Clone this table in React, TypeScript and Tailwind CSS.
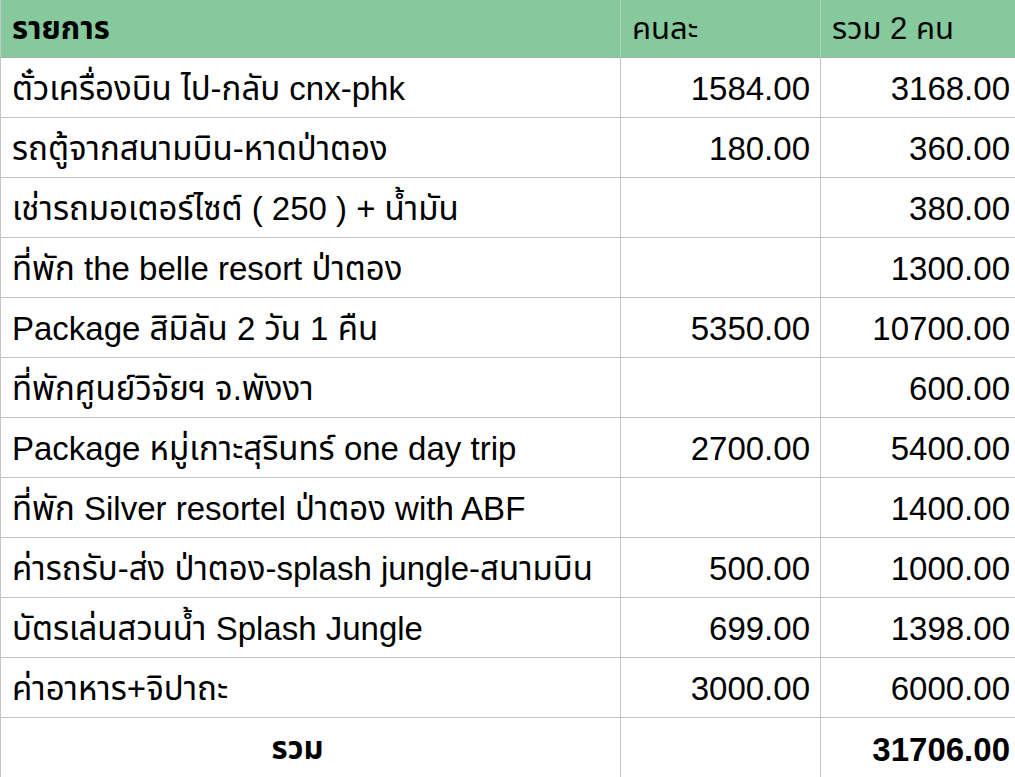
import React from "react";

const rows: [string, string, string][] = [
  ["ตั๋วเครื่องบิน ไป-กลับ cnx-phk", "1584.00", "3168.00"],
  ["รถตู้จากสนามบิน-หาดป่าตอง", "180.00", "360.00"],
  ["เช่ารถมอเตอร์ไซต์ ( 250 ) + น้ำมัน", "", "380.00"],
  ["ที่พัก the belle resort ป่าตอง", "", "1300.00"],
  ["Package สิมิลัน 2 วัน 1 คืน", "5350.00", "10700.00"],
  ["ที่พักศูนย์วิจัยฯ จ.พังงา", "", "600.00"],
  ["Package หมู่เกาะสุรินทร์ one day trip", "2700.00", "5400.00"],
  ["ที่พัก Silver resortel ป่าตอง with ABF", "", "1400.00"],
  ["ค่ารถรับ-ส่ง ป่าตอง-splash jungle-สนามบิน", "500.00", "1000.00"],
  ["บัตรเล่นสวนน้ำ Splash Jungle", "699.00", "1398.00"],
  ["ค่าอาหาร+จิปาถะ", "3000.00", "6000.00"],
];

export default function App() {
  return (
    <div
      className="w-[1015px] h-[777px] overflow-hidden bg-white text-black text-[33px] leading-none"
      style={{ fontFamily: '"Liberation Sans", "Noto Sans Thai", "Noto Sans", sans-serif' }}
    >
      <div className="grid grid-cols-[620px_200px_200px] w-[1020px]">
        <div className="h-[58px] bg-[#85c99d] border-b border-[#9fb8a6] flex items-center pl-[11px] font-bold text-[31px] border-l border-l-[#c8c8c8]">รายการ</div>
        <div className="h-[58px] bg-[#85c99d] border-b border-[#9fb8a6] border-l border-l-[#b4c9b9] flex items-center pl-[11px] text-[31px]">คนละ</div>
        <div className="h-[58px] bg-[#85c99d] border-b border-[#9fb8a6] border-l border-l-[#b4c9b9] flex items-center pl-[11px] text-[31px]">รวม 2 คน</div>
        {rows.map((r, i) => (
          <React.Fragment key={i}>
            <div className="h-[60px] border-b border-l border-[#c4c4c4] flex items-center pl-[11px] pt-[2px] whitespace-nowrap">{r[0]}</div>
            <div className="h-[60px] border-b border-l border-[#c4c4c4] flex items-center justify-end pr-[10px] pt-[2px]">{r[1]}</div>
            <div className="h-[60px] border-b border-l border-[#c4c4c4] flex items-center justify-end pr-[10px] pt-[2px]">{r[2]}</div>
          </React.Fragment>
        ))}
        <div className="h-[60px] border-l border-[#c4c4c4] flex items-center justify-center font-bold text-[31px] pr-[26px]">รวม</div>
        <div className="h-[60px] border-l border-[#c4c4c4]"></div>
        <div className="h-[60px] border-l border-[#c4c4c4] flex items-center justify-end pr-[10px] pt-[2px] font-bold">31706.00</div>
      </div>
    </div>
  );
}
